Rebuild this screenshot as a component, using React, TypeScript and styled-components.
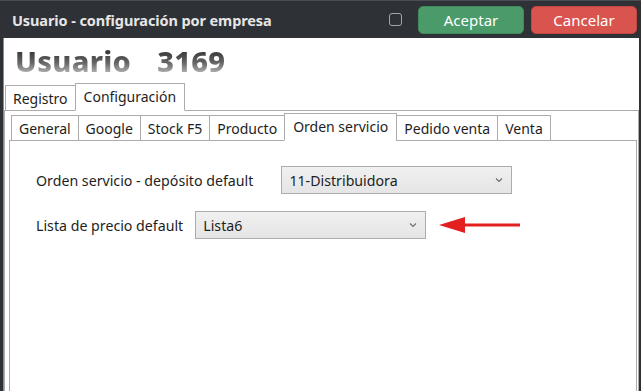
import React from "react";
import styled, { createGlobalStyle } from "styled-components";

const GlobalStyle = createGlobalStyle`
  html, body {
    margin: 0;
    padding: 0;
    background: #2e3135;
  }
  body {
    font-family: "Noto Sans", "Open Sans", sans-serif;
  }
`;

const Window = styled.div`
  width: 641px;
  height: 391px;
  background: #2e3135;
  display: flex;
  flex-direction: column;
  overflow: hidden;
`;

const TitleBar = styled.div`
  height: 38px;
  display: flex;
  align-items: center;
  padding: 0 4px 0 12px;
  box-sizing: border-box;
  border-top: 1px solid #4a4d52;
`;

const Title = styled.div`
  flex: 1;
  color: #e6e6e6;
  font-weight: 700;
  font-size: 14.5px;
  letter-spacing: -0.1px;
`;

const Check = styled.span`
  flex-shrink: 0;
  width: 11px;
  height: 11px;
  border: 1.5px solid #a3a5a8;
  border-radius: 3px;
  margin-right: 9px;
`;

const Button = styled.button<{ $color: string; $border: string }>`
  width: 106px;
  height: 28px;
  margin-left: 7px;
  border-radius: 5px;
  border: 1px solid ${(p) => p.$border};
  background: ${(p) => p.$color};
  color: #fff;
  font-family: "Noto Sans", sans-serif;
  font-size: 15px;
  padding: 0;
  cursor: pointer;
`;

const Body = styled.div`
  flex: 1;
  background: #fff;
  margin: 0 2px 0 3px;
  display: flex;
  flex-direction: column;
  border-left: 1px solid #8a8c8f;
`;

const Heading = styled.h1`
  margin: 0;
  height: 45px;
  padding: 4px 0 0 11px;
  box-sizing: border-box;
  display: flex;
  gap: 26px;
  font-family: "Noto Sans", sans-serif;
  font-weight: 800;
  font-size: 29px;
  line-height: 38px;
  letter-spacing: 0.3px;
  background: linear-gradient(180deg, #262626 20%, #666 55%, #eaeaea 95%);
  -webkit-background-clip: text;
  background-clip: text;
  color: transparent;
  width: fit-content;
`;

const TabStrip = styled.div<{ $left: number }>`
  display: flex;
  align-items: flex-end;
  height: 28px;
  padding-left: ${(p) => p.$left}px;
  position: relative;
  z-index: 1;
  margin-bottom: -1px;
`;

const Tab = styled.div<{ $active?: boolean }>`
  height: ${(p) => (p.$active ? 28 : 26)}px;
  box-sizing: border-box;
  border: 1px solid #acacac;
  border-bottom: ${(p) => (p.$active ? "1px solid #fff" : "1px solid #acacac")};
  margin-left: -1px;
  background: #fff;
  padding: 0 ${(p) => (p.$active ? 8 : 7)}px;
  display: flex;
  align-items: center;
  font-size: 14px;
  color: #1e1e1e;
  ${(p) => (p.$active ? "padding-bottom: 2px;" : "")}
`;

const Panel = styled.div<{ $pad: string }>`
  flex: 1;
  border: 1px solid #acacac;
  border-bottom: none;
  padding: ${(p) => p.$pad};
  display: flex;
  flex-direction: column;
`;

const Fields = styled.div`
  padding: 25px 0 0 26px;
  display: flex;
  flex-direction: column;
  gap: 17px;
`;

const Row = styled.div<{ $gap: number }>`
  display: flex;
  align-items: center;
  gap: ${(p) => p.$gap}px;
`;

const Label = styled.span`
  font-size: 14.2px;
  color: #1e1e1e;
`;

const Select = styled.div`
  width: 231px;
  height: 28px;
  box-sizing: border-box;
  border: 1px solid #acacac;
  background: linear-gradient(180deg, #f0f0f0, #e5e5e5);
  display: flex;
  align-items: center;
  padding: 0 8px 0 7px;
  font-size: 14.2px;
  color: #1e1e1e;
`;

const SelectText = styled.span`
  flex: 1;
`;

const Arrow = styled.svg`
  margin-left: 1px;
`;

const Chevron = () => (
  <svg width="8" height="6" viewBox="0 0 8 6">
    <path d="M1 1.5 L4 4.5 L7 1.5" fill="none" stroke="#6e6e6e" strokeWidth="1.2" />
  </svg>
);

export default function App() {
  return (
    <>
      <GlobalStyle />
      <Window>
        <TitleBar>
          <Title>Usuario - configuración por empresa</Title>
          <Check />
          <Button $color="#4a9b69" $border="#3e8a5b">Aceptar</Button>
          <Button $color="#d9534f" $border="#c44440">Cancelar</Button>
        </TitleBar>
        <Body>
          <Heading>
            <span>Usuario</span>
            <span>3169</span>
          </Heading>
          <TabStrip $left={2}>
            <Tab>Registro</Tab>
            <Tab $active>Configuración</Tab>
          </TabStrip>
          <Panel $pad="2px 1px 0 4px">
            <TabStrip $left={3}>
              <Tab>General</Tab>
              <Tab>Google</Tab>
              <Tab>Stock F5</Tab>
              <Tab>Producto</Tab>
              <Tab $active>Orden servicio</Tab>
              <Tab>Pedido venta</Tab>
              <Tab>Venta</Tab>
            </TabStrip>
            <Panel $pad="0">
              <Fields>
                <Row $gap={28}>
                  <Label>Orden servicio - depósito default</Label>
                  <Select>
                    <SelectText>11-Distribuidora</SelectText>
                    <Chevron />
                  </Select>
                </Row>
                <Row $gap={12}>
                  <Label>Lista de precio default</Label>
                  <Select>
                    <SelectText>Lista6</SelectText>
                    <Chevron />
                  </Select>
                  <Arrow width="82" height="18" viewBox="0 0 82 18">
                    <path d="M24 7.5 H81 V10.5 H24 Z" fill="#e3201f" />
                    <path d="M0 9 L26 1 L26 17 Z" fill="#e3201f" />
                  </Arrow>
                </Row>
              </Fields>
            </Panel>
          </Panel>
        </Body>
      </Window>
    </>
  );
}
